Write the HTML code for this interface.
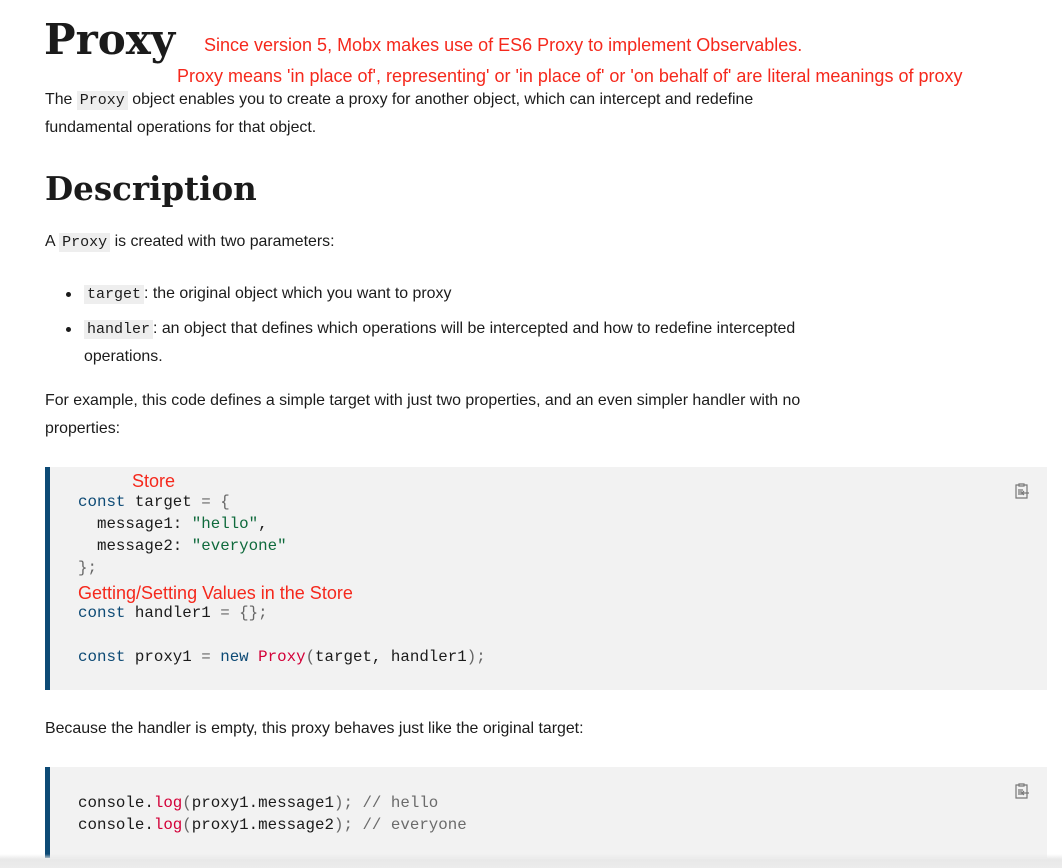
<!DOCTYPE html>
<html><head><meta charset="utf-8"><style>
body{margin:0;width:1062px;height:868px;overflow:hidden;background:#fff;font-family:"Liberation Sans",Arial,sans-serif;color:#1b1b1b;position:relative}
.a{position:absolute;white-space:nowrap}
.t{font-size:15.9px;line-height:28px}
code{font-family:"Liberation Mono",monospace;font-size:15px;background:#eee;padding:1px 3px;color:#1b1b1b}
h{font-family:"DejaVu Serif",serif;font-weight:bold;color:#1b1b1b}
.red{color:#f5281c;font-size:18px}
.blk{position:absolute;left:45px;width:1002px;background:#f2f2f2;border-left:5px solid #0d4a75;box-sizing:border-box}
pre{margin:0;font-family:"Liberation Mono",monospace;font-size:15.8px;line-height:22px;color:#1b1b1b;position:absolute;left:78px}
.k{color:#0d4a75}.s{color:#0f6a3c}.f{color:#d30038}.p{color:#666}.c{color:#6b6b6b}
.dot{position:absolute;width:5px;height:5px;border-radius:50%;background:#1b1b1b}
</style></head><body>
<div class="a" style="left:44px;top:12px;font-size:42px;line-height:56px"><h>Proxy</h></div>
<div class="a red" style="left:204px;top:35px">Since version 5, Mobx makes use of ES6 Proxy to implement Observables.</div>
<div class="a red" style="left:177px;top:66px">Proxy means 'in place of', representing' or 'in place of' or 'on behalf of' are literal meanings of proxy</div>
<div class="a t" style="left:45px;top:86px">The <code>Proxy</code> object enables you to create a proxy for another object, which can intercept and redefine</div>
<div class="a t" style="left:45px;top:114px">fundamental operations for that object.</div>
<div class="a" style="left:45px;top:167px;font-size:32.5px;line-height:44px"><h>Description</h></div>
<div class="a t" style="left:45px;top:228px">A <code>Proxy</code> is created with two parameters:</div>
<div class="dot" style="left:66px;top:292px"></div>
<div class="a t" style="left:84px;top:280px"><code>target</code>: the original object which you want to proxy</div>
<div class="dot" style="left:66px;top:327px"></div>
<div class="a t" style="left:84px;top:315px"><code>handler</code>: an object that defines which operations will be intercepted and how to redefine intercepted</div>
<div class="a t" style="left:84px;top:343px">operations.</div>
<div class="a t" style="left:45px;top:387px">For example, this code defines a simple target with just two properties, and an even simpler handler with no</div>
<div class="a t" style="left:45px;top:415px">properties:</div>
<div class="blk" style="top:467px;height:223px"></div>
<div class="a red" style="left:132px;top:471px">Store</div>
<pre style="top:491px"><span class="k">const</span> target <span class="p">=</span> <span class="p">{</span>
  message1: <span class="s">"hello"</span>,
  message2: <span class="s">"everyone"</span>
<span class="p">};</span></pre>
<div class="a red" style="left:78px;top:583px">Getting/Setting Values in the Store</div>
<pre style="top:602px"><span class="k">const</span> handler1 <span class="p">=</span> <span class="p">{};</span>

<span class="k">const</span> proxy1 <span class="p">=</span> <span class="k">new</span> <span class="f">Proxy</span><span class="p">(</span>target, handler1<span class="p">);</span></pre>
<svg class="a" style="left:1014px;top:482px" width="16" height="18" viewBox="0 0 16 18"><path d="M2 3h3v-1h5v1h3v13h-11z M5 2h5v2h-5z" fill="none" stroke="#777" stroke-width="1.2"/><path d="M4 8h5M4 10h4M4 12h5M8 11h7M10 9l-2 2 2 2" fill="none" stroke="#777" stroke-width="1.2"/></svg>
<div class="a t" style="left:45px;top:715px">Because the handler is empty, this proxy behaves just like the original target:</div>
<div class="blk" style="top:767px;height:91px"></div>
<pre style="top:792px">console.<span class="f">log</span><span class="p">(</span>proxy1.message1<span class="p">);</span> <span class="c">// hello</span>
console.<span class="f">log</span><span class="p">(</span>proxy1.message2<span class="p">);</span> <span class="c">// everyone</span></pre>
<svg class="a" style="left:1014px;top:782px" width="16" height="18" viewBox="0 0 16 18"><path d="M2 3h3v-1h5v1h3v13h-11z M5 2h5v2h-5z" fill="none" stroke="#777" stroke-width="1.2"/><path d="M4 8h5M4 10h4M4 12h5M8 11h7M10 9l-2 2 2 2" fill="none" stroke="#777" stroke-width="1.2"/></svg>
<div style="position:absolute;left:0;top:854px;width:1062px;height:14px;background:linear-gradient(#fff0,#e8e8e8 40%,#ececec)"></div>
</body></html>
